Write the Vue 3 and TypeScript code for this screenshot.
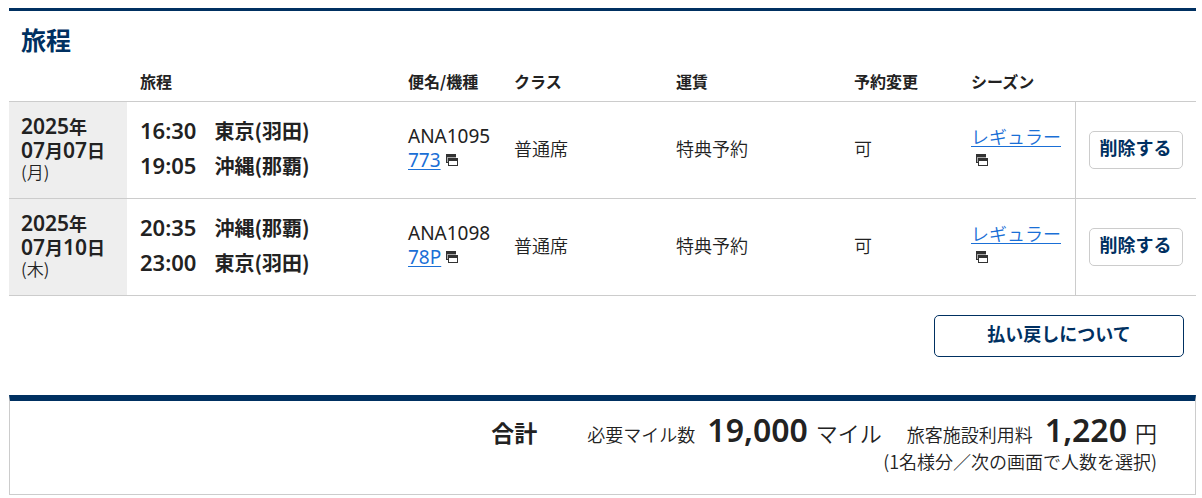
<script setup lang="ts">
interface Leg {
  year: string
  month: string
  day: string
  weekday: string
  depTime: string
  depPlace: string
  arrTime: string
  arrPlace: string
  flight: string
  aircraft: string
}

const legs: Leg[] = [
  {
    year: '2025', month: '07', day: '07', weekday: '月',
    depTime: '16:30', depPlace: '東京(羽田)',
    arrTime: '19:05', arrPlace: '沖縄(那覇)',
    flight: 'ANA1095', aircraft: '773',
  },
  {
    year: '2025', month: '07', day: '10', weekday: '木',
    depTime: '20:35', depPlace: '沖縄(那覇)',
    arrTime: '23:00', arrPlace: '東京(羽田)',
    flight: 'ANA1098', aircraft: '78P',
  },
]
</script>

<template>
  <main class="page">
    <section class="itinerary">
      <h2 class="title">旅程</h2>
      <table class="legs">
        <colgroup>
          <col class="c-date" />
          <col />
          <col class="c-flight" />
          <col class="c-class" />
          <col class="c-fare" />
          <col class="c-change" />
          <col class="c-season" />
          <col class="c-action" />
        </colgroup>
        <thead>
          <tr>
            <td></td>
            <th scope="col">旅程</th>
            <th scope="col">便名/機種</th>
            <th scope="col">クラス</th>
            <th scope="col">運賃</th>
            <th scope="col">予約変更</th>
            <th scope="col">シーズン</th>
            <td></td>
          </tr>
        </thead>
        <tbody>
          <tr v-for="leg in legs" :key="leg.flight">
            <th class="date" scope="row">
              <div><span class="num">{{ leg.year }}</span>年</div>
              <div><span class="num">{{ leg.month }}</span>月<span class="num">{{ leg.day }}</span>日</div>
              <div class="weekday">({{ leg.weekday }})</div>
            </th>
            <td>
              <div class="stop"><span class="time">{{ leg.depTime }}</span><span>{{ leg.depPlace }}</span></div>
              <div class="stop"><span class="time">{{ leg.arrTime }}</span><span>{{ leg.arrPlace }}</span></div>
            </td>
            <td>
              <div class="flight">{{ leg.flight }}</div>
              <div class="flight aircraft">
                <a href="#">{{ leg.aircraft }}</a>
                <svg class="win" viewBox="0 0 12 12" aria-hidden="true">
                  <path class="pale" d="M1 3h9v1H2v4H1z" />
                  <path class="dark" d="M0 0h10v3H1v5h1v1H0z" />
                  <path class="dark" fill-rule="evenodd" d="M2 4h10v8H2zM3 7v4h8V7z" />
                </svg>
              </div>
            </td>
            <td>普通席</td>
            <td>特典予約</td>
            <td>可</td>
            <td>
              <div><a href="#">レギュラー</a></div>
              <div class="season-window">
                <svg class="win" viewBox="0 0 12 12" aria-hidden="true">
                  <path class="pale" d="M1 3h9v1H2v4H1z" />
                  <path class="dark" d="M0 0h10v3H1v5h1v1H0z" />
                  <path class="dark" fill-rule="evenodd" d="M2 4h10v8H2zM3 7v4h8V7z" />
                </svg>
              </div>
            </td>
            <td class="action"><button type="button" class="delete">削除する</button></td>
          </tr>
        </tbody>
      </table>
      <div class="refund-row">
        <button type="button" class="refund">払い戻しについて</button>
      </div>
    </section>

    <section class="total">
      <div class="sum">
        <h3 class="sum-title">合計</h3>
        <div class="item">
          <span>必要マイル数</span><strong>19,000</strong><span class="unit">マイル</span>
        </div>
        <div class="item">
          <span>旅客施設利用料</span><strong>1,220</strong><span class="unit">円</span>
        </div>
      </div>
      <p class="note">(1名様分／次の画面で人数を選択)</p>
    </section>
  </main>
</template>

<style>
body {
  background: #fff;
}
</style>

<style scoped>
.page {
  padding: 8px 6px 3px 9px;
  color: #222;
  font: 350 18px/24px "Noto Sans CJK JP", sans-serif;
}
.itinerary {
  border-top: 3px solid #003061;
}
.title {
  margin: 0;
  padding: 10px 12px 0;
  color: #003061;
  font-size: 25px;
  line-height: 36px;
}
.legs {
  width: 100%;
  table-layout: fixed;
  border-collapse: collapse;
}
.c-date { width: 118px; }
.c-flight { width: 106px; }
.c-class { width: 162px; }
.c-fare { width: 178px; }
.c-change { width: 117px; }
.c-season { width: 117px; }
.c-action { width: 121px; }
.legs th,
.legs td {
  padding: 0 0 0 13px;
  text-align: left;
  vertical-align: middle;
  white-space: nowrap;
}
.legs tr {
  border-bottom: 1px solid #ccc;
}
.legs thead th {
  height: 40px;
  padding-top: 4px;
  font-size: 16px;
}
.legs tbody td,
.legs tbody th {
  height: 92px;
  padding-bottom: 4px;
}
.legs tbody .date {
  padding-left: 12px;
  background: #eee;
}
.date .num {
  font-family: "Noto Sans", sans-serif;
  font-size: 21px;
  font-weight: 600;
}
.date .weekday {
  font-size: 17px;
  font-weight: 350;
  line-height: 20px;
}
.stop {
  display: flex;
  align-items: baseline;
  gap: 18px;
  font-size: 20px;
  font-weight: 700;
  line-height: 35px;
}
.time {
  font-family: "Noto Sans", sans-serif;
  font-size: 22px;
  font-weight: 600;
}
.flight {
  font-family: "Noto Sans", sans-serif;
  font-size: 19px;
  font-weight: 400;
}
.aircraft {
  display: flex;
  align-items: center;
  gap: 5px;
}
a {
  color: #1a6fd6;
  text-decoration: underline;
  text-underline-offset: 2px;
}
.win {
  width: 12px;
  height: 12px;
}
.dark {
  fill: #333;
}
.pale {
  fill: #aaa;
}
.season-window {
  display: flex;
  align-items: center;
  height: 24px;
  padding-left: 5px;
}
.legs tbody .action {
  height: 96px;
  padding-bottom: 0;
  border-left: 1px solid #ccc;
}
button {
  color: #003061;
  background: #fff;
  font: 700 18px/24px "Noto Sans CJK JP", sans-serif;
  cursor: pointer;
}
.delete {
  padding: 3px 10px 9px;
  border: 1px solid #ccc;
  border-radius: 5px;
}
.refund-row {
  display: flex;
  justify-content: flex-end;
  padding: 19px 12px 38px;
}
.refund {
  width: 250px;
  padding: 5px 0 11px;
  border: 1px solid #003061;
  border-radius: 5px;
}
.total {
  padding: 12px 38px 23px;
  border: 1px solid #ccc;
  border-top: 6px solid #003061;
}
.sum {
  display: flex;
  justify-content: flex-end;
  align-items: baseline;
  line-height: 34px;
}
.sum-title {
  margin: 0 50px 0 0;
  font-size: 23px;
}
.item {
  display: flex;
  align-items: baseline;
}
.item + .item {
  margin-left: 25px;
}
.item strong {
  margin: 0 8px 0 12px;
  font-family: "Noto Sans", sans-serif;
  font-size: 32px;
  font-weight: 600;
}
.unit {
  font-size: 22px;
}
.note {
  margin: 0;
  text-align: right;
  line-height: 20px;
}
</style>
